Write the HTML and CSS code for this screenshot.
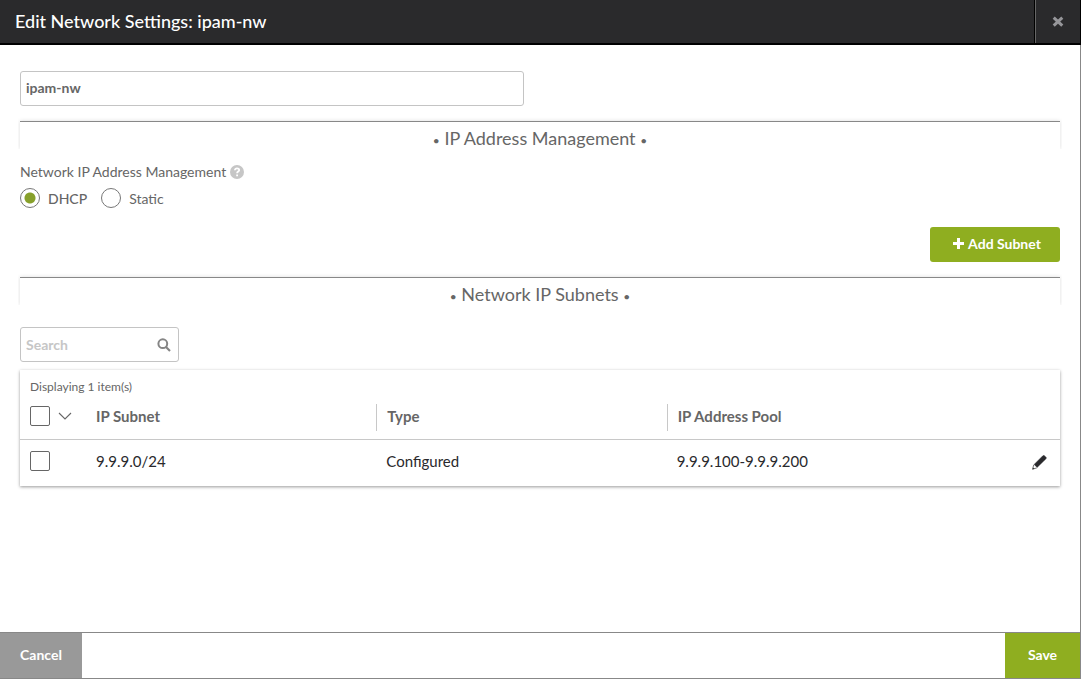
FILE: index.html
```html
<!DOCTYPE html>
<html lang="en">
<head>
<meta charset="utf-8">
<title>Edit Network Settings: ipam-nw</title>
<link rel="stylesheet" href="styles.css">
</head>
<body>
<div class="modal">
  <header class="modal-header">
    <h1 class="title">Edit Network Settings: ipam-nw</h1>
    <button class="close" type="button" aria-label="Close">
      <svg width="12" height="12" viewBox="0 0 12 12"><path d="M2.8 2.6 9.2 8.6M9.2 2.6 2.8 8.6" stroke="#96969a" stroke-width="3" stroke-linecap="square"/></svg>
    </button>
  </header>
  <main class="modal-body">
    <input class="field name" type="text" aria-label="Network name" value="ipam-nw">
    <h2 class="section"><span class="dot">•</span> IP Address Management <span class="dot">•</span></h2>
    <fieldset class="ipam">
      <legend class="legend">Network IP Address Management
        <svg width="14" height="14" viewBox="0 0 14 14"><circle cx="7" cy="7" r="7" fill="#c6c6c6"/><path d="M4.9 5.3C4.9 4 5.8 3.3 7 3.3s2.2.7 2.2 1.8c0 1.5-2.1 1.5-2.1 3.1M7.1 9.4v1.8" fill="none" stroke="#fff" stroke-width="1.8"/></svg>
      </legend>
      <div class="radios">
        <label class="option selected"><input class="radio" type="radio" name="mode" checked>DHCP</label>
        <label class="option"><input class="radio" type="radio" name="mode">Static</label>
      </div>
    </fieldset>
    <div class="actions">
      <button class="add" type="button">
        <svg width="11" height="11" viewBox="0 0 11 11"><path d="M5.5 0v11M0 5.5h11" stroke="#fff" stroke-width="3"/></svg>
        Add Subnet
      </button>
    </div>
    <h2 class="section"><span class="dot">•</span> Network IP Subnets <span class="dot">•</span></h2>
    <div class="field search">
      <input class="search-input" type="text" placeholder="Search" aria-label="Search subnets">
      <svg width="14" height="14" viewBox="0 0 14 14"><circle cx="5.8" cy="5.7" r="4.4" fill="none" stroke="#858585" stroke-width="2"/><path d="m9 9 4 4" stroke="#858585" stroke-width="2.2"/></svg>
    </div>
    <div class="card">
      <table class="grid">
        <caption class="count">Displaying 1 item(s)</caption>
        <colgroup><col class="col-check"><col><col><col><col class="col-edit"></colgroup>
        <thead>
          <tr>
            <th class="check"><div class="check-group"><input class="box" type="checkbox" aria-label="Select all"><button class="menu" type="button" aria-label="Selection menu"><svg width="14" height="8" viewBox="0 0 14 8"><path d="m1 1 6 6 6-6" fill="none" stroke="#666" stroke-width="1.1"/></svg></button></div></th>
            <th><span class="head">IP Subnet</span></th>
            <th><span class="head ruled">Type</span></th>
            <th><span class="head ruled">IP Address Pool</span></th>
            <th></th>
          </tr>
        </thead>
        <tbody>
          <tr>
            <td class="check"><div class="check-group"><input class="box" type="checkbox" aria-label="Select 9.9.9.0/24"></div></td>
            <td class="cell">9.9.9.0/24</td>
            <td class="cell">Configured</td>
            <td class="cell">9.9.9.100-9.9.9.200</td>
            <td class="edit-cell"><button class="edit" type="button" aria-label="Edit subnet"><svg width="15" height="15" viewBox="0 0 15 15"><path d="m10.6 1 1.2-.8 2.7 2.6-1 1.4-8.4 8.2-3-2.9z" fill="#29292c" stroke="#29292c" stroke-linejoin="round" stroke-width=".5"/><path d="m1.7 9.9-1.1 4.3 4.2-1.3" fill="#fff" stroke="#555" stroke-width=".8"/><path d="m.5 14.5.5-2.1 1.6 1.4z" fill="#333"/></svg></button></td>
          </tr>
        </tbody>
      </table>
    </div>
  </main>
  <footer class="modal-footer">
    <button class="cancel" type="button">Cancel</button>
    <button class="save" type="button">Save</button>
  </footer>
</div>
</body>
</html>
```

FILE: styles.css
```css
* { box-sizing: border-box; }
body { margin: 0; font-family: Lato, "Liberation Sans", sans-serif; font-size: 15px; color: #666; background: #fff; }
button, input { font: inherit; margin: 0; }
button { padding: 0; border: 0; background: none; cursor: pointer; }
svg { display: block; flex: none; }

.modal { min-height: 100vh; display: flex; flex-direction: column; border-right: 1px solid #888; border-bottom: 1px solid #888; }
.modal-header { display: flex; height: 45px; margin-right: -1px; background: #2a2a2c; border-bottom: 2px solid #000; }
.title { flex: 1; margin: 0; padding-left: 15px; font-size: 18px; line-height: 43px; font-weight: 500; color: #fff; }
.close { width: 47px; display: flex; align-items: center; justify-content: center; border-left: 1px solid #000; border-right: 1px solid #000; box-shadow: inset 1px 0 #666; }
.modal-body { flex: 1; padding: 26px 20px 20px; }

.field { height: 35px; border: 1px solid #c4c4c4; border-radius: 3px; background: #fff; color: #666; }
.name { display: block; width: 504px; max-width: 100%; padding: 0 5px 2px; font-size: 14px; font-weight: 700; margin-bottom: 15px; }

.section { margin: 0; height: 28px; border-top: 1px solid #888; box-shadow: 0 0 4px rgba(0,0,0,.14); clip-path: inset(-4px -2px 0); font-size: 18px; line-height: 32px; font-weight: 400; text-align: center; }
.dot { font-size: 12px; }

.ipam { margin: 0; padding: 7px 0 0; border: 0; min-width: 0; }
.legend { display: flex; align-items: center; gap: 4px; padding: 14px 0 0; font-size: 14px; line-height: 18px; }
.radios { display: flex; gap: 14px; }
.option { display: flex; align-items: center; gap: 8px; height: 20px; font-size: 14px; }
.selected { font-weight: 500; }
.radio { appearance: none; width: 20px; height: 20px; margin: 0; border: 1px solid #777; border-radius: 50%; background: #fff; }
.radio:checked { background: radial-gradient(circle, #87a02b 5px, #fff 6px); }

.actions { display: flex; justify-content: flex-end; padding: 19px 0 15px; }
.add { display: flex; align-items: center; justify-content: center; gap: 4px; width: 130px; height: 35px; padding: 0 0 2px 4px; border-radius: 3px; background: #8fae20; color: #fff; font-size: 14px; font-weight: 700; }

.search { display: flex; align-items: center; width: 159px; margin: 22px 0 8px; padding: 0 7px 0 5px; }
.search-input { flex: 1; min-width: 0; padding: 0; border: 0; outline: 0; font-size: 14px; font-weight: 700; color: #666; background: none; }
.search-input::placeholder { color: #c6c6c6; }

.card { background: #fff; box-shadow: 0 1px 3px rgba(0,0,0,.4); }
.grid { width: 100%; table-layout: fixed; border-collapse: collapse; }
.col-check { width: 66px; }
.col-edit { width: 103px; }
.count { height: 29px; padding: 9px 10px 0; text-align: left; font-size: 12px; line-height: 16px; }
th, td { padding: 0; text-align: left; vertical-align: top; }
th { padding-top: 5px; }
thead tr { height: 40px; border-bottom: 1px solid #c8c8c8; }
tbody tr { height: 47px; }
th.check { padding: 7px 0 0 10px; }
td.check { padding: 11px 0 0 10px; }
.check-group { display: flex; align-items: center; gap: 8px; }
.box { appearance: none; width: 20px; height: 20px; border: 1px solid #666; border-radius: 2px; background: #fff; }
.head { display: block; height: 27px; padding-left: 10px; font-size: 15px; line-height: 25px; font-weight: 700; }
.ruled { border-left: 1px solid #c8c8c8; }
.cell { padding-left: 10px; line-height: 43px; color: #29292c; }
.edit-cell { padding: 15px 13px 0 0; }
.edit { display: block; margin-left: auto; }

.modal-footer { display: flex; justify-content: space-between; height: 46px; border-top: 1px solid #888; }
.cancel, .save { padding-bottom: 2px; color: #fff; font-size: 14px; font-weight: 700; }
.cancel { width: 82px; background: #999; }
.save { width: 75px; background: #8fae20; }
```
